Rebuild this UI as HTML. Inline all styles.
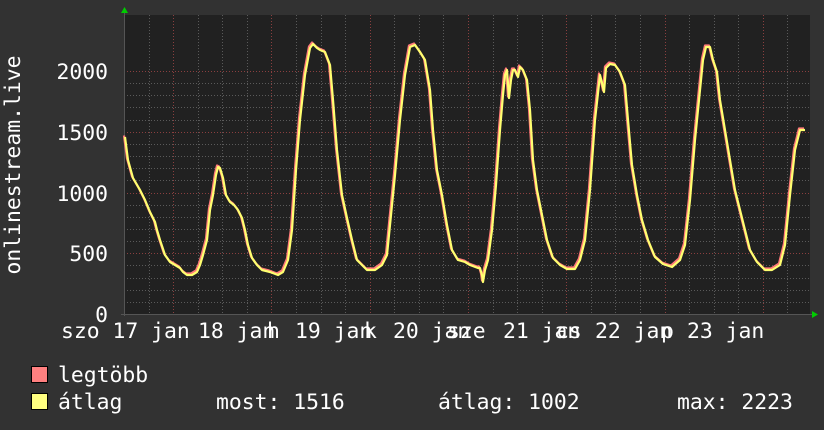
<!DOCTYPE html>
<html><head><meta charset="utf-8"><style>
html,body{margin:0;padding:0;background:#323232;}
svg{display:block}
text{font-family:"DejaVu Sans Mono","Liberation Mono",monospace;font-size:21.4px;fill:#fff;}
</style></head><body>
<svg width="824" height="430" xmlns="http://www.w3.org/2000/svg">
<rect width="824" height="430" fill="#323232"/>
<rect x="124" y="15" width="686" height="299" fill="#212121"/>
<g stroke-width="1" fill="none">
<path id="minor" stroke="#5a5a5a" stroke-dasharray="1,2" d=""/>
<path id="major" stroke="#8a3f3f" stroke-dasharray="1,2" d=""/>
</g>
<line x1="124.5" y1="12" x2="124.5" y2="316" stroke="#555"/>
<line x1="121" y1="314.5" x2="812" y2="314.5" stroke="#555"/>
<polygon points="121,13 124.5,7 128,13" fill="#0c0"/>
<polygon points="812,311 818,314.5 812,318" fill="#0c0"/>
<polyline id="pk" fill="none" stroke="#ff7a7a" stroke-width="2.2" stroke-linejoin="round" points=""/>
<polyline id="yl" fill="none" stroke="#ffff70" stroke-width="2.2" stroke-linejoin="round" points=""/>
<g text-anchor="end">
<text x="108" y="79">2000</text>
<text x="108" y="140">1500</text>
<text x="108" y="201">1000</text>
<text x="108" y="261">500</text>
<text x="108" y="322">0</text>
</g>
<text transform="translate(20,165) rotate(-90)" text-anchor="middle">onlinestream.live</text>
<g style="white-space:pre">
<text x="61" y="338">szo 17 jan</text>
<text x="198" y="338">18 jan</text>
<text x="267" y="338">h</text>
<text x="295" y="338">19 jan</text>
<text x="364" y="338">k</text>
<text x="393" y="338">20 jan</text>
<text x="447" y="338">sze</text>
<text x="503" y="338">21 jan</text>
<text x="556" y="338">cs</text>
<text x="595" y="338">22 jan</text>
<text x="661" y="338">p</text>
<text x="687" y="338">23 jan</text>
</g>
<rect x="31.5" y="366.5" width="16" height="16" fill="#ff8080" stroke="#000"/>
<rect x="31.5" y="393.5" width="16" height="16" fill="#ffff80" stroke="#000"/>
<text x="58" y="382">legtöbb</text>
<text x="58" y="409">átlag</text>
<text x="216" y="409">most: 1516</text>
<text x="438" y="409">átlag: 1002</text>
<text x="677" y="409">max: 2223</text>
</svg>
<script>
var pts=[[125,137],[128,160],[133,178],[140,190],[145,200],[150,212],[155,222],[157,230],[160,240],[165,255],[170,262],[175,265],[180,268],[183,272],[187,275],[192,275],[197,272],[200,265],[203,255],[207,240],[210,210],[213,195],[216,175],[218,167],[220,168],[223,178],[226,195],[230,202],[234,205],[238,210],[242,218],[245,230],[248,245],[252,258],[257,265],[262,270],[270,272],[278,275],[283,272],[288,260],[292,230],[296,170],[300,120],[305,75],[310,48],[313,44],[317,48],[320,50],[325,52],[330,65],[333,100],[337,150],[342,195],[347,218],[352,240],[357,260],[362,265],[367,270],[375,270],[382,265],[387,255],[390,225],[395,175],[400,120],[405,75],[410,47],[415,45],[420,52],[425,60],[430,90],[433,130],[437,170],[442,195],[447,225],[452,250],[458,260],[465,262],[470,265],[478,268],[480,268],[482,275],[483,282],[485,270],[488,260],[492,230],[496,185],[500,130],[503,95],[505,75],[507,70],[509,98],[511,80],[513,70],[515,70],[518,77],[520,67],[523,70],[527,80],[530,110],[533,160],[537,190],[542,215],[547,240],[553,258],[560,265],[567,269],[575,269],[580,260],[585,240],[590,190],[595,120],[600,75],[602,83],[604,92],[606,68],[610,64],[615,65],[620,72],[625,85],[628,120],[632,165],[637,195],[642,220],[648,240],[655,257],[663,264],[672,267],[680,260],[685,245],[690,200],[695,140],[700,90],[703,60],[706,47],[710,47],[713,60],[717,72],[720,100],[725,130],[730,160],[735,190],[740,210],[745,230],[750,250],[757,262],[765,270],[772,270],[780,265],[785,245],[790,195],[795,150],[800,130],[805,130]];
document.getElementById('yl').setAttribute('points',pts.map(p=>p.join(',')).join(' '));
document.getElementById('pk').setAttribute('points',pts.map(p=>(p[0]-1)+','+(p[1]-1.5)).join(' '));
var mi='',ma='';
for(var i=0;i<=20;i++){var y=Math.round(314-i*12.15)+0.5;if(y<15)break;var s='M124 '+y+'H810';if(i%5==0&&i>0)ma+=s;else if(i>0)mi+=s;}
for(var k=0;k<28;k++){var x=Math.round(124+k*24.57)+0.5;if(x>810)break;var s='M'+x+' 15V314';if((k-2)%4==0)ma+=s;else if(k>0)mi+=s;}
document.getElementById('minor').setAttribute('d',mi);
document.getElementById('major').setAttribute('d',ma);
</script>
</body></html>
